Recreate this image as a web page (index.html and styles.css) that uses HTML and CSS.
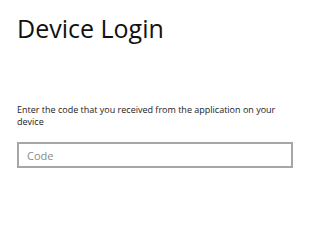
FILE: index.html
```html
<!DOCTYPE html>
<html>
    <head>
        <meta charset="utf-8">
        <title>Device Login</title>
        <link rel="stylesheet" href="styles.css">
    </head>
    <body>
        <div class="login">
            <h1 class="title">Device Login</h1>
            <p class="hint">Enter the code that you received from the application on your device</p>
            <input class="code" type="text" placeholder="Code"/>
        </div>
    </body>
</html>
```
FILE: styles.css
```css
body {
    margin:0;
    background:#fff;
    font-family:"Open Sans", "Noto Sans", sans-serif;
    color:#1a1a1a;
}
.login {
    width:275px;
    padding:10px 0 0 17px;
}
.title {
    margin:0;
    font-size:25px;
    font-weight:400;
    line-height:36px;
    color:#111;
}
.hint {
    margin:58px 0 0 0;
    font-size:9px;
    line-height:12px;
    color:#222;
}
.code {
    display:block;
    box-sizing:border-box;
    width:276px;
    height:26px;
    margin-top:14px;
    padding:0 8px;
    border:2px solid #a6a6a6;
    font-family:"Open Sans", "Noto Sans", sans-serif;
    font-size:11px;
    outline:none;
}
.code::placeholder {
    color:#8a8a8a;
}
```
